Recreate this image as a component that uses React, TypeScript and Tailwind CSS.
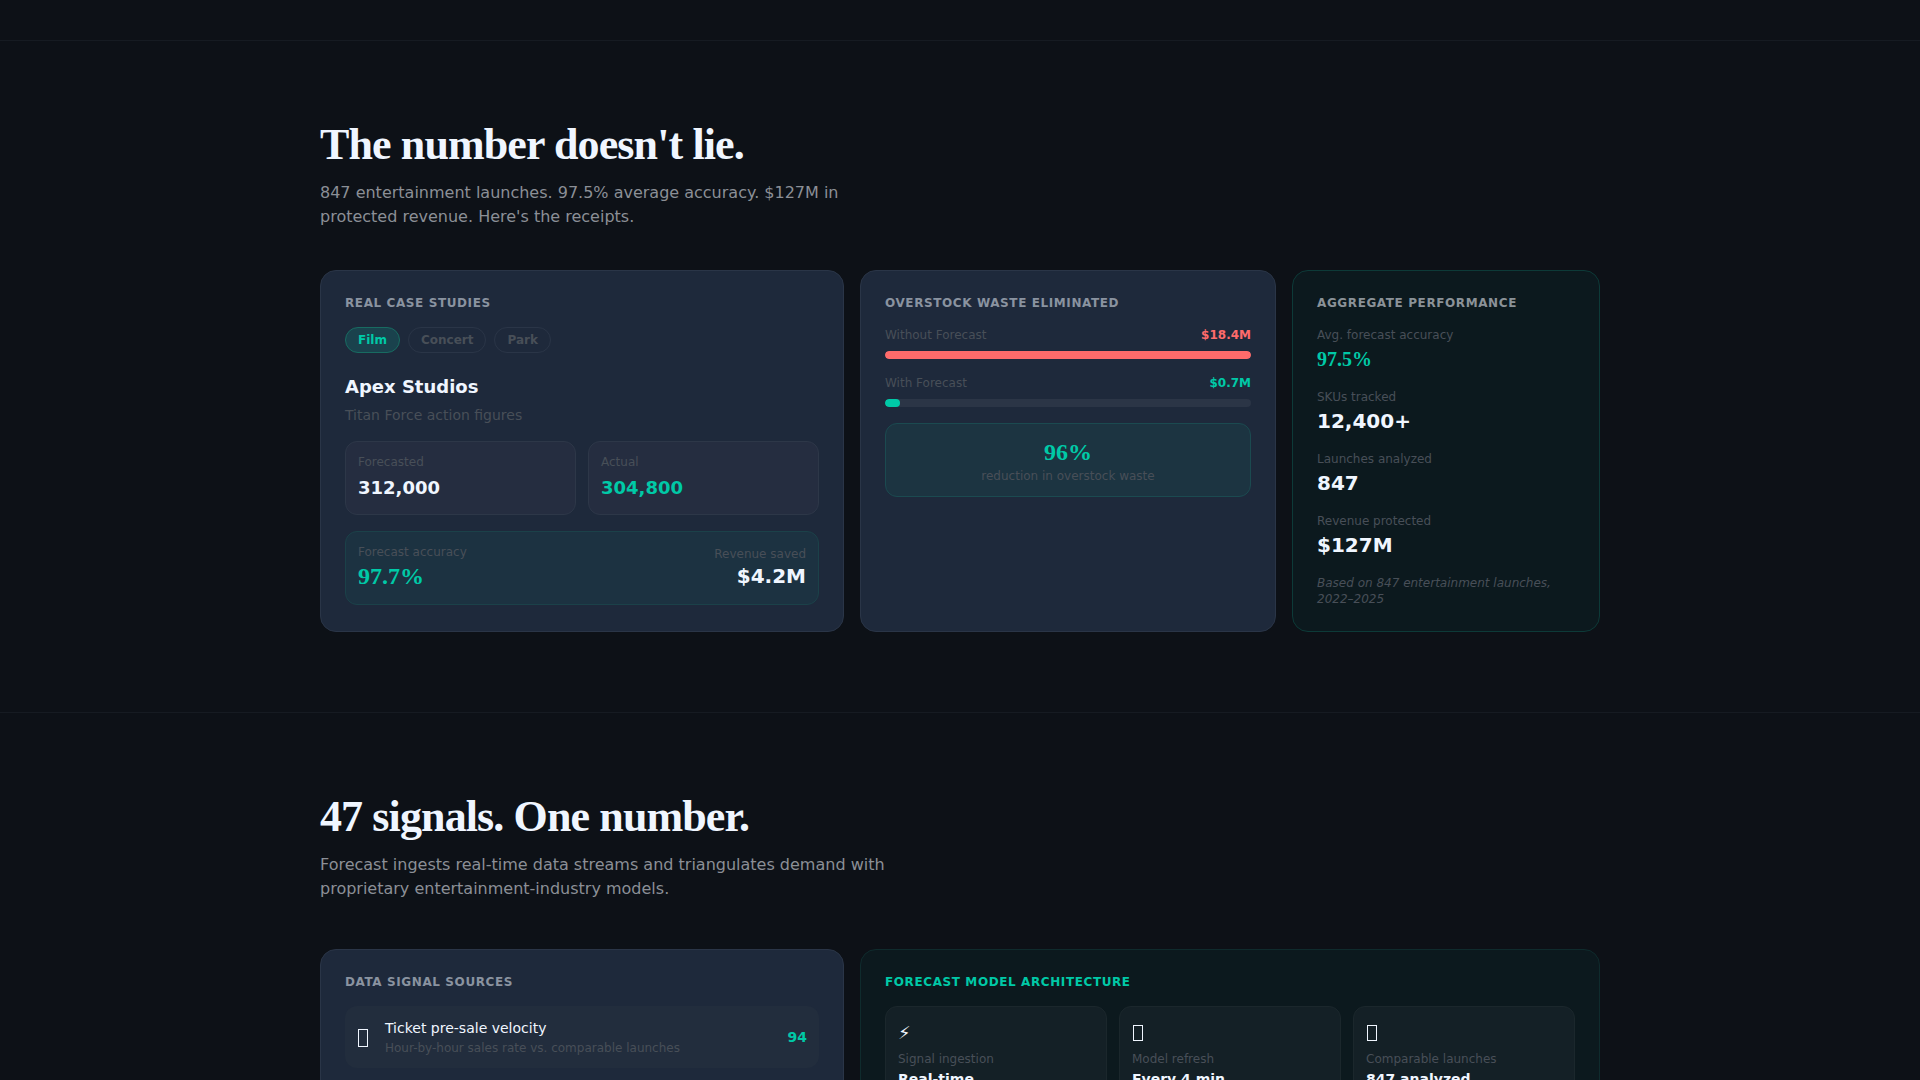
import { useState } from 'react';

const cases = [
  { tab: 'Film', client: 'Apex Studios', product: 'Titan Force action figures', forecast: '312,000', actual: '304,800', accuracy: '97.7%', saved: '$4.2M' },
  { tab: 'Concert', client: 'Apex Live', product: 'Tour merchandise', forecast: '184,000', actual: '179,600', accuracy: '97.6%', saved: '$2.8M' },
  { tab: 'Park', client: 'Apex Parks', product: 'Seasonal collectibles', forecast: '96,000', actual: '93,400', accuracy: '97.3%', saved: '$1.9M' },
];

const waste = [
  { label: 'Without Forecast', value: '$18.4M', percent: 100, text: 'text-[#ff6b6b]', bar: 'bg-[#ff6b6b]' },
  { label: 'With Forecast', value: '$0.7M', percent: 4, text: 'text-[#00c9a7]', bar: 'bg-[#00c9a7]' },
];

const totals = [
  { label: 'Avg. forecast accuracy', value: '97.5%', highlight: true },
  { label: 'SKUs tracked', value: '12,400+' },
  { label: 'Launches analyzed', value: '847' },
  { label: 'Revenue protected', value: '$127M' },
];

const signals = [
  { name: 'Ticket pre-sale velocity', detail: 'Hour-by-hour sales rate vs. comparable launches', score: 94 },
];

const model = [
  { icon: '⚡', label: 'Signal ingestion', value: 'Real-time' },
  { icon: <BoxIcon width={10} height={16} />, label: 'Model refresh', value: 'Every 4 min' },
  { icon: <BoxIcon width={10} height={16} />, label: 'Comparable launches', value: '847 analyzed' },
];

const serif = "font-['Liberation_Serif',serif]";

function BoxIcon({ width, height }: { width: number; height: number }) {
  return (
    <svg width={width + 2} height="28" fill="none" stroke="currentColor" aria-hidden="true">
      <rect x="1.5" y="6.5" width={width - 1} height={height - 1} />
    </svg>
  );
}

function SectionIntro({ title, children }: { title: string; children: React.ReactNode }) {
  return (
    <>
      <h2 className={`${serif} text-[44px] leading-[48px] font-bold tracking-[-0.02em] mb-3`}>{title}</h2>
      <p className="text-base text-[#8b8f96] max-w-xl">{children}</p>
    </>
  );
}

function CardTitle({ className = 'text-[#8a93a0]', children }: { className?: string; children: React.ReactNode }) {
  return <h3 className={`text-xs font-bold uppercase tracking-wider mb-4 ${className}`}>{children}</h3>;
}

function CaseStudies() {
  const [active, setActive] = useState(0);
  const study = cases[active];

  return (
    <div className="lg:col-span-5 bg-[#1e293b] border border-[#2a3547] rounded-2xl p-6">
      <CardTitle>Real case studies</CardTitle>
      <div className="flex gap-2 mb-5">
        {cases.map((item, i) => (
          <button
            key={item.tab}
            type="button"
            onClick={() => setActive(i)}
            className={`rounded-full border px-3 py-1 text-xs font-bold ${
              i === active ? 'bg-[#1a424d] border-[#186b61] text-[#00c9a7]' : 'border-[#2a3547] text-[#484f58]'
            }`}
          >
            {item.tab}
          </button>
        ))}
      </div>
      <h4 className="text-lg leading-7 font-bold">{study.client}</h4>
      <p className="mt-1 text-sm text-[#484f58]">{study.product}</p>
      <div className="grid grid-cols-2 gap-3 mt-4">
        <div className="bg-[#252d40] border border-[#2d3748] rounded-xl p-3">
          <div className="text-xs text-[#484f58]">Forecasted</div>
          <div className="mt-1 text-lg leading-7 font-bold">{study.forecast}</div>
        </div>
        <div className="bg-[#252d40] border border-[#2d3748] rounded-xl p-3">
          <div className="text-xs text-[#484f58]">Actual</div>
          <div className="mt-1 text-lg leading-7 font-bold text-[#00c9a7]">{study.actual}</div>
        </div>
      </div>
      <div className="flex items-center justify-between mt-4 bg-[#1c3241] border border-[#1b4149] rounded-xl p-3">
        <div>
          <div className="text-xs text-[#484f58]">Forecast accuracy</div>
          <div className={`${serif} text-2xl font-bold text-[#00c9a7]`}>{study.accuracy}</div>
        </div>
        <div className="text-right">
          <div className="text-xs text-[#484f58]">Revenue saved</div>
          <div className="text-xl font-bold">{study.saved}</div>
        </div>
      </div>
    </div>
  );
}

function WasteCard() {
  return (
    <div className="lg:col-span-4 bg-[#1e293b] border border-[#2a3547] rounded-2xl p-6">
      <CardTitle>Overstock waste eliminated</CardTitle>
      <div className="flex flex-col gap-4">
        {waste.map((item) => (
          <div key={item.label}>
            <div className="flex justify-between text-xs">
              <span className="text-[#484f58]">{item.label}</span>
              <span className={`font-bold ${item.text}`}>{item.value}</span>
            </div>
            <div className="mt-2 h-2 rounded-full bg-[#2b3546] overflow-hidden">
              <div className={`h-full rounded-full ${item.bar}`} style={{ width: `${item.percent}%` }} />
            </div>
          </div>
        ))}
        <div className="bg-[#1c3441] border border-[#1b4a50] rounded-xl p-3 text-center">
          <div className={`${serif} text-2xl font-bold text-[#00c9a7]`}>96%</div>
          <div className="text-xs text-[#484f58]">reduction in overstock waste</div>
        </div>
      </div>
    </div>
  );
}

function TotalsCard() {
  return (
    <div className="lg:col-span-3 bg-[#0c191e] border border-[#0d3a38] rounded-2xl p-6">
      <CardTitle className="text-[#8b9298]">Aggregate performance</CardTitle>
      <div className="flex flex-col gap-4">
        {totals.map((item) => (
          <div key={item.label}>
            <div className="text-xs text-[#484f58]">{item.label}</div>
            <div className={`mt-0.5 text-xl font-bold ${item.highlight ? `${serif} text-[#00c9a7]` : ''}`}>{item.value}</div>
          </div>
        ))}
        <p className="text-xs italic text-[#484f58]">Based on 847 entertainment launches, 2022–2025</p>
      </div>
    </div>
  );
}

export default function App() {
  return (
    <main className="h-screen overflow-hidden bg-[#0d1117] text-[#f0f6ff] font-['DejaVu_Sans',sans-serif]">
      <div className="h-10" />

      <section className="border-t border-[#161b22] py-20">
        <div className="max-w-7xl mx-auto">
          <SectionIntro title="The number doesn't lie.">
            847 entertainment launches. 97.5% average accuracy. $127M in protected revenue. Here's the receipts.
          </SectionIntro>
          <div className="grid grid-cols-1 lg:grid-cols-12 gap-4 mt-[41px]">
            <CaseStudies />
            <WasteCard />
            <TotalsCard />
          </div>
        </div>
      </section>

      <section className="border-t border-[#161b22] py-20">
        <div className="max-w-7xl mx-auto">
          <SectionIntro title="47 signals. One number.">
            Forecast ingests real-time data streams and triangulates demand with proprietary entertainment-industry models.
          </SectionIntro>
          <div className="grid grid-cols-1 lg:grid-cols-12 gap-4 mt-12">
            <div className="lg:col-span-5 bg-[#1e293b] border border-[#2a3547] rounded-2xl p-6">
              <CardTitle>Data signal sources</CardTitle>
              {signals.map((signal) => (
                <div key={signal.name} className="flex items-center gap-4 bg-[#222d3d] rounded-xl p-3">
                  <BoxIcon width={10} height={18} />
                  <div className="flex-1">
                    <div className="text-sm">{signal.name}</div>
                    <div className="mt-0.5 text-xs text-[#484f58]">{signal.detail}</div>
                  </div>
                  <span className="text-sm font-bold text-[#00c9a7]">{signal.score}</span>
                </div>
              ))}
            </div>

            <div className="lg:col-span-7 bg-[#0c191e] border border-[#0f2b2d] rounded-2xl p-6">
              <CardTitle className="text-[#00c9a7]">Forecast model architecture</CardTitle>
              <div className="grid grid-cols-3 gap-3">
                {model.map((item) => (
                  <div key={item.label} className="bg-[#142026] border border-[#1b272c] rounded-xl p-3">
                    <div className="h-7 text-lg leading-7">{item.icon}</div>
                    <div className="mt-1 text-xs text-[#484f58]">{item.label}</div>
                    <div className="mt-0.5 text-sm font-bold">{item.value}</div>
                  </div>
                ))}
              </div>
            </div>
          </div>
        </div>
      </section>
    </main>
  );
}
